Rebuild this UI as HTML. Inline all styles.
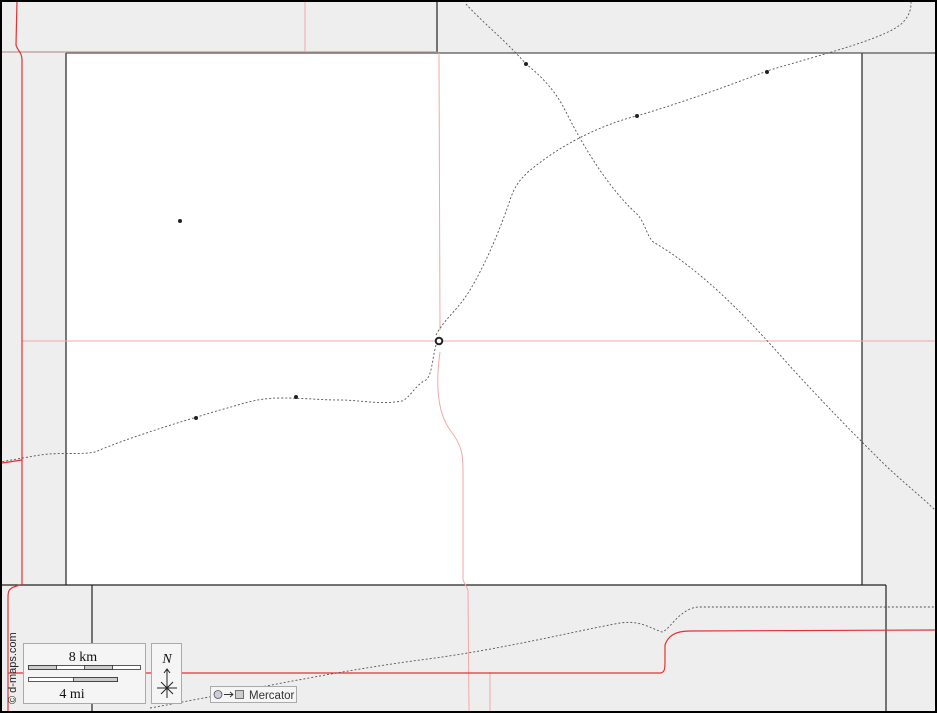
<!DOCTYPE html>
<html><head><meta charset="utf-8"><style>
html,body{margin:0;padding:0;background:#fff}
svg{display:block}
text{font-family:"Liberation Serif",serif}
</style></head><body>
<svg width="937" height="713" viewBox="0 0 937 713" xmlns="http://www.w3.org/2000/svg">
<rect x="0" y="0" width="937" height="713" fill="#eeeeee"/>
<rect x="66" y="53" width="796" height="532" fill="#ffffff"/>
<g stroke="#222" stroke-width="1.2" fill="none">
<line x1="66" y1="53" x2="66" y2="585"/>
<line x1="862" y1="53" x2="862" y2="585"/>
<line x1="0" y1="585" x2="886" y2="585"/>
<line x1="886" y1="585" x2="886" y2="713"/>
<line x1="92" y1="585" x2="92" y2="713"/>
<line x1="437" y1="0" x2="437" y2="52"/>
<line x1="66" y1="53" x2="937" y2="53" stroke="#555"/>
<line x1="0" y1="52" x2="437" y2="52" stroke="#b99"/>
</g>
<g stroke="#f3a8a8" stroke-width="1" fill="none">
<line x1="22" y1="341" x2="937" y2="341"/>
<line x1="305" y1="0" x2="305" y2="52"/>
<path d="M439 53 L440 330 M440 352 C436 380,436 410,450 430 C462 445,463 455,463 470 L463 580 L468 590 L469 713"/>
<line x1="490" y1="672" x2="490" y2="713"/>
</g>
<g stroke="#e83030" stroke-width="1.2" fill="none">
<path d="M17 0 L16 45 C17 50,22 52,22 60 L22 585"/>
<path d="M2 463 L22 460"/>
<path d="M20 585 C8 588,8 590,8 600 L8 713"/>
<path d="M8 673 L660 673 C665 673,665 668,665 660 L665 645 C668 636,675 631,690 631 L937 630"/>
</g>
<g stroke="#555" stroke-width="0.9" fill="none" stroke-dasharray="2,2">
<path d="M466 4 C480 20,505 40,526 64 C540 75,555 90,565 110 C585 150,610 190,638 215 C646 225,648 240,655 243 C700 270,740 310,780 355 C820 400,860 440,880 460 C900 480,920 495,937 512"/>
<path d="M436 335 C445 318,458 310,470 290 C485 265,500 230,510 200 C515 185,520 180,528 172 C560 145,600 125,640 115 C690 100,730 85,770 70 C820 55,880 40,900 25 C912 15,911 5,911 0"/>
<path d="M436 345 C432 360,432 375,426 380 C415 385,410 398,402 401 C380 405,360 400,340 400 C320 400,305 398,280 398 C255 398,240 405,220 410 C180 422,130 437,95 452 C80 455,60 452,40 455 L0 462"/>
<path d="M150 708 C250 690,330 672,420 660 C500 650,580 630,620 623 C640 620,650 628,662 632 C670 630,680 607,700 607 L937 607"/>
</g>
<g fill="#222">
<circle cx="526" cy="64" r="2"/><circle cx="767" cy="72" r="2"/><circle cx="637" cy="116" r="2"/>
<circle cx="180" cy="221" r="2"/><circle cx="296" cy="397" r="2"/><circle cx="196" cy="418" r="2"/>
</g>
<circle cx="439" cy="341" r="3.3" fill="#fff" stroke="#222" stroke-width="2"/>
<rect x="23.5" y="643.5" width="122" height="60" fill="#f5f5f5" stroke="#aaa"/>
<text x="83" y="661" font-size="14" text-anchor="middle" fill="#111">8 km</text>
<rect x="28.5" y="665.5" width="112" height="4" fill="#fff" stroke="#333" stroke-width="0.8"/>
<rect x="28.5" y="665.5" width="28" height="4" fill="#ccc" stroke="#333" stroke-width="0.8"/>
<rect x="84.5" y="665.5" width="28" height="4" fill="#ccc" stroke="#333" stroke-width="0.8"/>
<rect x="28.5" y="677.5" width="89" height="4" fill="#fff" stroke="#333" stroke-width="0.8"/>
<rect x="73.5" y="677.5" width="44" height="4" fill="#ccc" stroke="#333" stroke-width="0.8"/>
<text x="72" y="698" font-size="14" text-anchor="middle" fill="#111">4 mi</text>
<rect x="151.5" y="643.5" width="30" height="60" fill="#f5f5f5" stroke="#aaa"/>
<text x="167" y="663" font-size="14" font-style="italic" text-anchor="middle" fill="#111">N</text>
<g stroke="#222" stroke-width="1" fill="none"><line x1="167" y1="669" x2="167" y2="698"/><line x1="157" y1="688" x2="177" y2="688"/><line x1="161" y1="682" x2="173" y2="694"/><line x1="173" y1="682" x2="161" y2="694"/><path d="M164 673 L167 669 L170 673"/></g>
<rect x="210.5" y="686.5" width="86" height="16" fill="#f5f5f5" stroke="#aaa"/>
<circle cx="218" cy="694.5" r="4" fill="#ccd" stroke="#555" stroke-width="0.8"/>
<path d="M224 694.5 L233 694.5 M230 692 L233 694.5 L230 697" stroke="#333" stroke-width="0.9" fill="none"/>
<rect x="235.5" y="690.5" width="8" height="8" fill="#ccc" stroke="#555" stroke-width="0.8"/>
<text x="249" y="699" font-size="11.5" fill="#333" style="font-family:'Liberation Sans',sans-serif">Mercator</text>
<text transform="translate(16,704) rotate(-90)" font-size="11" fill="#222" style="font-family:'Liberation Sans',sans-serif">© d-maps.com</text>
<rect x="1" y="1" width="935" height="711" fill="none" stroke="#000" stroke-width="2"/>
</svg>
</body></html>
